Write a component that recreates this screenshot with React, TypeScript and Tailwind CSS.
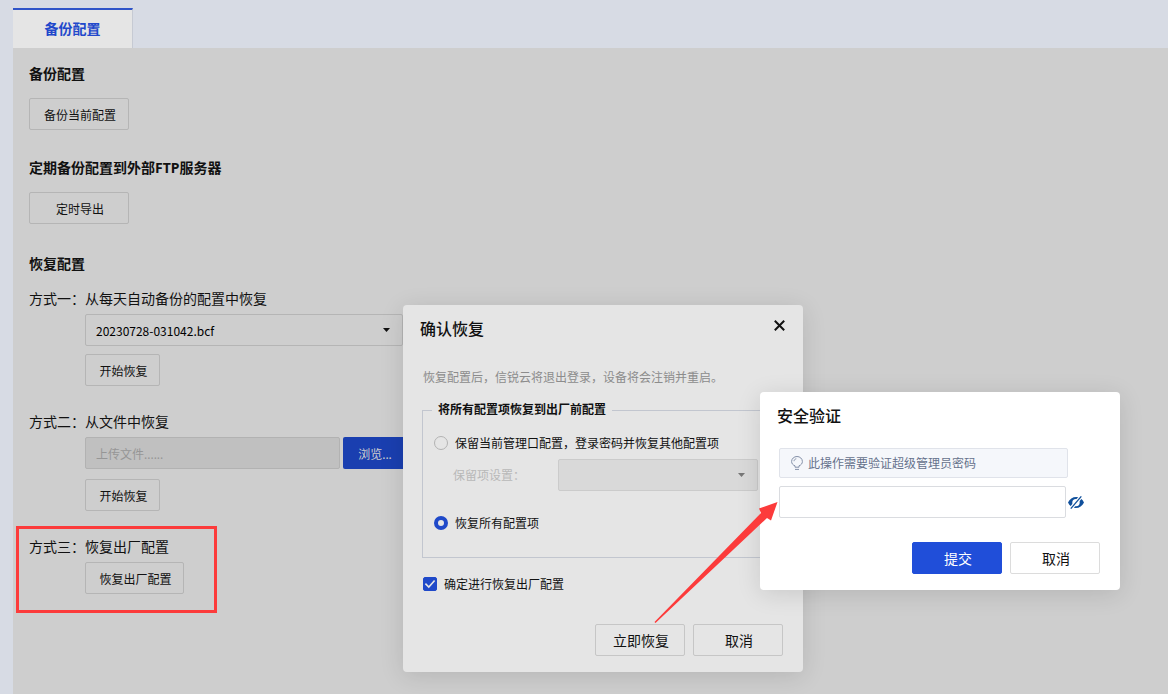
import type { ReactNode } from 'react';

interface ActionButtonProps {
  children: ReactNode;
  className?: string;
}

function PageButton({ children, className = '' }: ActionButtonProps) {
  return (
    <button
      type="button"
      className={`block h-8 rounded-xs border border-[#b5b5b5] pt-1 pl-0.5 text-center text-xs text-[#111111] ${className}`}
    >
      {children}
    </button>
  );
}

function DialogButton({ children, className = '' }: ActionButtonProps) {
  return (
    <button type="button" className={`h-8 w-[90px] rounded-xs border pt-0.5 pl-0.5 text-sm ${className}`}>
      {children}
    </button>
  );
}

function Caret({ className = '' }: { className?: string }) {
  return (
    <svg viewBox="0 0 7 4" aria-hidden="true" className={`pointer-events-none absolute h-1 w-[7px] ${className}`}>
      <path d="M0 0h7L3.5 4z" fill="currentColor" />
    </svg>
  );
}

function BulbIcon() {
  return (
    <svg viewBox="0 0 12 14" aria-hidden="true" className="h-3.5 w-3 shrink-0 text-[#8490a8]" fill="none" stroke="currentColor">
      <path d="M4 11.2V9.800C1.900 9.100.600 7.500.600 5.500a5.400 5 0 0 1 10.800 0c0 2-1.300 3.600-3.400 4.300v1.400z" />
      <path d="M3 5.200C3.100 3.900 4 3 5.300 2.800M4 13.400h4" />
    </svg>
  );
}

function HiddenEyeIcon() {
  return (
    <svg viewBox="0 0 16 13" aria-hidden="true" className="h-[13px] w-4">
      <path
        fill="#10509c"
        fillRule="evenodd"
        d="M0 6.5C1.6 3 4.6 1 8.2 1c3.600 0 6.400 2 7.800 5.500-1.600 3.500-4.600 5.500-8.200 5.500S1.400 10 0 6.500zm4.300.1a3.700 3.700 0 1 0 7.400 0 3.700 3.700 0 0 0-7.400 0z"
      />
      <path d="M13.500 0 2.500 13" stroke="#ffffff" strokeWidth="3.600" />
      <path d="M13.300.4 2.800 12.600" stroke="#10509c" strokeWidth="1.300" />
    </svg>
  );
}

function RestoreDialog() {
  return (
    <div
      role="dialog"
      aria-labelledby="restore-title"
      className="absolute top-[305px] left-[403px] w-[400px] rounded-[4px] bg-[#e5e5e5] px-5 pb-4 text-xs text-[#111111] shadow-[0_4px_24px_rgba(0,0,0,0.12)]"
    >
      <div className="-mr-1 -ml-[3px] flex h-12 items-center justify-between">
        <h2 id="restore-title" className="text-base font-medium">确认恢复</h2>
        <button type="button" aria-label="关闭" className="mb-2 flex size-4 items-center justify-center">
          <svg viewBox="0 0 11 11" aria-hidden="true" className="size-[11px]">
            <path d="M.8.8l9.400 9.400M10.200.8.8 10.200" stroke="#111111" strokeWidth="2" />
          </svg>
        </button>
      </div>
      <p className="mt-4 pt-px leading-4 text-[#8c8c8c]">恢复配置后，信锐云将退出登录，设备将会注销并重启。</p>
      <fieldset className="-ml-px mt-4 h-[156px] border border-[#c2c6cf] px-[11px]">
        <legend className="-ml-0.5 px-1.5 leading-4 font-bold">将所有配置项恢复到出厂前配置</legend>
        <label className="mt-[15px] flex h-5 items-center gap-[7px]">
          <input
            type="radio"
            name="scope"
            className="size-3.5 shrink-0 appearance-none rounded-full border border-[#b3b3b3] checked:border-4 checked:border-[#1f49c9]"
          />
          <span className="pt-0.5">保留当前管理口配置，登录密码并恢复其他配置项</span>
        </label>
        <div className="mt-1.5 flex h-8 items-center pl-[19px] text-[#b8b8b8]">
          <label htmlFor="keep-items" className="w-[105px] pt-0.5">保留项设置：</label>
          <div className="relative">
            <select
              id="keep-items"
              disabled
              className="block h-8 w-[200px] appearance-none rounded-xs border border-[#cbcbcb] bg-[#d9d9d9] px-2.5 opacity-100"
            />
            <Caret className="top-3.5 right-[13px] text-[#777777]" />
          </div>
        </div>
        <label className="mt-[22px] flex h-5 items-center gap-[7px]">
          <input
            type="radio"
            name="scope"
            defaultChecked
            className="size-3.5 shrink-0 appearance-none rounded-full border border-[#b3b3b3] checked:border-4 checked:border-[#1f49c9]"
          />
          <span className="pt-0.5">恢复所有配置项</span>
        </label>
      </fieldset>
      <label className="mt-4 flex h-5 items-center gap-[7px]">
        <span className="relative flex size-3.5 shrink-0">
          <input
            type="checkbox"
            defaultChecked
            className="peer size-3.5 appearance-none rounded-xs border border-[#b3b3b3] checked:border-[#1f49c9] checked:bg-[#1f49c9]"
          />
          <svg
            viewBox="0 0 14 14"
            aria-hidden="true"
            className="pointer-events-none absolute inset-0 hidden size-3.5 peer-checked:block"
          >
            <path d="M2.400 6.600l3.400 3.500 5.800-6.600" fill="none" stroke="#e5e5e5" strokeWidth="1.600" />
          </svg>
        </span>
        <span className="pt-0.5">确定进行恢复出厂配置</span>
      </label>
      <div className="mt-[30px] flex justify-end gap-2">
        <DialogButton className="border-[#c6c6c6]">立即恢复</DialogButton>
        <DialogButton className="border-[#c6c6c6]">取消</DialogButton>
      </div>
    </div>
  );
}

function SecurityDialog() {
  return (
    <div
      role="dialog"
      aria-labelledby="security-title"
      className="absolute top-[392px] left-[760px] w-[360px] rounded-[4px] bg-white px-5 pb-4 text-xs text-[#111111] shadow-[0_4px_24px_rgba(0,0,0,0.12)]"
    >
      <h2 id="security-title" className="-ml-[3px] flex h-12 items-center text-base font-medium">安全验证</h2>
      <label
        htmlFor="admin-password"
        className="-ml-px mt-2 flex h-[30px] w-[289px] items-center gap-[5px] rounded-xs border border-[#e0e3ea] bg-[#f5f7fb] pl-[11px] text-[#66728c]"
      >
        <BulbIcon />
        <span className="pt-0.5">此操作需要验证超级管理员密码</span>
      </label>
      <div className="-ml-px mt-2 flex items-center gap-0.5">
        <input
          id="admin-password"
          type="password"
          className="h-8 w-[287px] rounded-xs border border-[#dadce0] px-2 outline-none"
        />
        <button type="button" aria-label="显示密码">
          <HiddenEyeIcon />
        </button>
      </div>
      <div className="mt-6 flex justify-end gap-2">
        <DialogButton className="border-[#204ed9] bg-[#204ed9] text-white">提交</DialogButton>
        <DialogButton className="border-[#dcdcdc]">取消</DialogButton>
      </div>
    </div>
  );
}

export default function App() {
  return (
    <div
      lang="zh-CN"
      className="relative flex min-h-screen flex-col overflow-hidden bg-[#d7dbe4] pt-2 pl-[13px] font-['Noto_Sans','Noto_Sans_CJK_SC',sans-serif] text-[#111111]"
    >
      <nav className="flex">
        <a
          href="#backup"
          className="flex h-10 w-[120px] items-center justify-center border-t-2 border-r border-t-[#2f54c8] border-r-[#c6cad3] bg-[#e5e5e5] text-sm font-bold text-[#2148cb]"
        >
          备份配置
        </a>
      </nav>

      <main id="backup" className="flex-1 bg-[#cecece] px-4 pt-4 text-sm">
        <section>
          <h2 className="font-bold">备份配置</h2>
          <PageButton className="mt-3.5 w-[100px]">备份当前配置</PageButton>
        </section>

        <section className="mt-7">
          <h2 className="font-bold">定期备份配置到外部FTP服务器</h2>
          <PageButton className="mt-3.5 w-[100px]">定时导出</PageButton>
        </section>

        <section className="mt-[30px]">
          <h2 className="font-bold">恢复配置</h2>

          <div className="mt-[15px] flex">
            <span className="w-14 shrink-0">方式一：</span>
            <div>
              <label htmlFor="backup-file" className="block">从每天自动备份的配置中恢复</label>
              <div className="relative mt-[5px] w-[318px]">
                <select
                  id="backup-file"
                  className="block h-8 w-full appearance-none rounded-xs border border-[#b5b5b5] px-2.5 pt-0.5 font-['Noto_Sans_CJK_SC',sans-serif] text-xs text-black"
                >
                  <option>20230728-031042.bcf</option>
                </select>
                <Caret className="top-3.5 right-[13px]" />
              </div>
              <PageButton className="mt-2 w-[75px]">开始恢复</PageButton>
            </div>
          </div>

          <div className="mt-[26px] flex">
            <span className="w-14 shrink-0">方式二：</span>
            <div>
              <label htmlFor="upload-file" className="block">从文件中恢复</label>
              <div className="mt-[5px] flex gap-[3px]">
                <input
                  id="upload-file"
                  type="text"
                  disabled
                  placeholder="上传文件......"
                  className="h-8 w-[255px] rounded-xs border border-[#b2b2b2] bg-[#c0c0c0] px-2.5 pt-0.5 text-xs placeholder:text-[#969696]"
                />
                <button type="button" className="h-8 w-16 rounded-xs bg-[#1a3fb0] pt-1 text-xs text-[#cecece]">
                  浏览...
                </button>
              </div>
              <PageButton className="mt-2.5 w-[75px]">开始恢复</PageButton>
            </div>
          </div>

          <div className="relative mt-[26px] flex w-fit">
            <span className="w-14 shrink-0">方式三：</span>
            <div>
              <p>恢复出厂配置</p>
              <PageButton className="mt-[5px] w-[99px]">恢复出厂配置</PageButton>
            </div>
            <div className="pointer-events-none absolute -top-[11px] -left-[13px] h-[87px] w-[201px] border-3 border-[#fc3b3b]" />
          </div>
        </section>
      </main>

      <RestoreDialog />
      <SecurityDialog />

      <svg
        viewBox="0 0 124 122"
        aria-hidden="true"
        className="pointer-events-none absolute top-[502px] left-[654px] h-[122px] w-[124px]"
      >
        <path d="M.5 120 107 11l-2-4.500L123.500 0 117 18.500l-4-2.500L1.500 121z" fill="#fc3b3b" />
      </svg>
    </div>
  );
}
